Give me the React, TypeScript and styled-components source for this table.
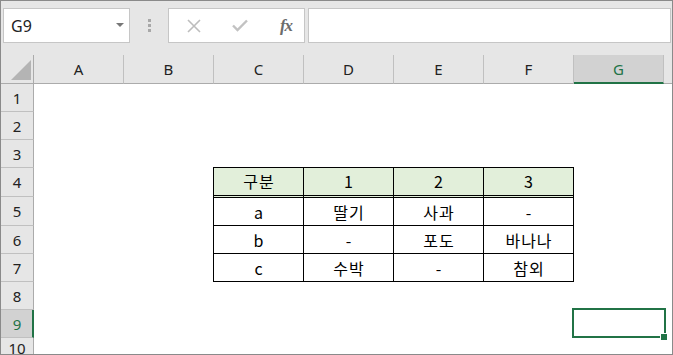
import styled, { createGlobalStyle } from "styled-components";

const GREEN = "#217346";
const HEADER_BG = "#e6e6e6";
const HEADER_SEL = "#d2d2d2";

const GlobalStyle = createGlobalStyle`
  html, body { margin: 0; padding: 0; background: #fff; }
  * { box-sizing: border-box; }
`;

const columns = ["A", "B", "C", "D", "E", "F", "G"];
const rows = [1, 2, 3, 4, 5, 6, 7, 8, 9, 10];
const activeCol = "G";
const activeRow = 9;

const header = ["구분", "1", "2", "3"];
const data = [
  ["a", "딸기", "사과", "-"],
  ["b", "-", "포도", "바나나"],
  ["c", "수박", "-", "참외"],
];

const Window = styled.div`
  width: 673px;
  height: 355px;
  border: 1px solid #8a8a8a;
  background: ${HEADER_BG};
  display: flex;
  flex-direction: column;
  overflow: hidden;
  font-family: "Noto Sans", "Open Sans", sans-serif;
  color: #222;
`;

const FormulaBar = styled.div`
  height: 54px;
  flex: none;
  display: flex;
  align-items: flex-start;
  padding: 7px 0 0 2px;
`;

const NameBox = styled.div`
  width: 127px;
  height: 35px;
  background: #fff;
  border: 1px solid #c6c6c6;
  display: flex;
  align-items: center;
  justify-content: space-between;
  padding: 0 5px 0 7px;
  font-size: 16px;
`;

const Caret = styled.span`
  width: 0;
  height: 0;
  border-left: 4px solid transparent;
  border-right: 4px solid transparent;
  border-top: 4px solid #777;
  margin-bottom: 2px;
`;

const Grip = styled.div`
  width: 38px;
  height: 35px;
  display: flex;
  flex-direction: column;
  align-items: center;
  justify-content: center;
  gap: 2px;
  span {
    width: 3px;
    height: 3px;
    background: #a8a8a8;
  }
`;

const ButtonBox = styled.div`
  width: 137px;
  height: 35px;
  background: #fff;
  border: 1px solid #c6c6c6;
  display: flex;
  align-items: center;
  padding-left: 14px;
  gap: 24px;
`;

const IconSlot = styled.span`
  width: 22px;
  height: 22px;
  display: flex;
  align-items: center;
  justify-content: center;
`;

const Fx = styled.span`
  font-family: "Liberation Serif", serif;
  font-style: italic;
  font-weight: bold;
  font-size: 17px;
  color: #6c6c6c;
  letter-spacing: -1px;
`;

const FormulaInput = styled.div`
  flex: 1;
  height: 35px;
  margin-left: 3px;
  margin-right: 1px;
  background: #fff;
  border: 1px solid #c6c6c6;
`;

const Sheet = styled.div`
  flex: 1;
  display: grid;
  grid-template-columns: 33px repeat(7, 90px) 1fr;
  grid-template-rows: 29px 28px 28px 28px 29px 29px 28px 28px 28px 28px 1fr;
  background: #fff;
`;

const Corner = styled.div`
  grid-column: 1;
  grid-row: 1;
  background: ${HEADER_BG};
  border-right: 1px solid #ababab;
  border-bottom: 1px solid #ababab;
  display: flex;
  align-items: flex-end;
  justify-content: flex-end;
  padding: 0 2px 3px 0;
`;

const CornerMark = styled.span`
  width: 0;
  height: 0;
  border-left: 20px solid transparent;
  border-bottom: 20px solid #b4b4b4;
`;

const ColHeader = styled.div<{ $active?: boolean }>`
  grid-row: 1;
  background: ${(p) => (p.$active ? HEADER_SEL : HEADER_BG)};
  border-right: 1px solid #c0c0c0;
  border-bottom: ${(p) => (p.$active ? `2px solid ${GREEN}` : "1px solid #ababab")};
  color: ${(p) => (p.$active ? GREEN : "#222")};
  display: flex;
  align-items: center;
  justify-content: center;
  font-size: 15px;
  padding-top: ${(p) => (p.$active ? "1px" : "0")};
`;

const HeaderFiller = styled.div`
  grid-row: 1;
  grid-column: 9;
  background: ${HEADER_BG};
  border-bottom: 1px solid #ababab;
`;

const RowHeader = styled.div<{ $active?: boolean; $row: number }>`
  grid-column: 1;
  grid-row: ${(p) => p.$row + 1};
  background: ${(p) => (p.$active ? HEADER_SEL : HEADER_BG)};
  border-right: ${(p) => (p.$active ? `2px solid ${GREEN}` : "1px solid #ababab")};
  border-bottom: 1px solid #c0c0c0;
  color: ${(p) => (p.$active ? GREEN : "#222")};
  display: flex;
  align-items: center;
  justify-content: center;
  padding-left: ${(p) => (p.$active ? "1px" : "0")};
  font-size: 15px;
  overflow: hidden;
`;

/* bordered table over C4:F7 */
const DataTable = styled.div`
  grid-column: 4 / 8;
  grid-row: 5 / 9;
  align-self: start;
  justify-self: start;
  margin: -1px 0 0 -1px;
  width: 361px;
  display: grid;
  grid-template-columns: repeat(4, 90px);
  grid-template-rows: 30px repeat(3, 28px);
  border-left: 1px solid #000;
  border-top: 1px solid #000;
  font-family: "Noto Sans CJK KR", "Noto Sans", sans-serif;
  font-size: 16px;
  letter-spacing: 1px;
  color: #000;
`;

const Cell = styled.div<{ $head?: boolean }>`
  background: ${(p) => (p.$head ? "#e2efda" : "#fff")};
  border-right: 1px solid #000;
  border-bottom: ${(p) => (p.$head ? "3px double #000" : "1px solid #000")};
  display: flex;
  align-items: center;
  justify-content: center;
  padding: 0 0 ${(p) => (p.$head ? "2px" : "0")} 1px;
`;

const Selection = styled.div`
  grid-column: 8;
  grid-row: 10;
  align-self: start;
  justify-self: start;
  margin: -2px 0 0 -2px;
  width: 94px;
  height: 30px;
  border: 2px solid ${GREEN};
  position: relative;
`;

const FillHandle = styled.span`
  position: absolute;
  left: 86px;
  top: 23px;
  width: 8px;
  height: 8px;
  background: ${GREEN};
  border: 1px solid #fff;
`;

function CancelIcon() {
  return (
    <svg width="14" height="14" viewBox="0 0 14 14">
      <path d="M1 1 L13 13 M13 1 L1 13" stroke="#bdbdbd" strokeWidth="1.6" fill="none" />
    </svg>
  );
}

function EnterIcon() {
  return (
    <svg width="16" height="13" viewBox="0 0 16 13">
      <path d="M1 6.5 L5.5 11 L15 1.5" stroke="#c2c2c2" strokeWidth="2.4" fill="none" />
    </svg>
  );
}

export default function App() {
  return (
    <>
      <GlobalStyle />
      <Window>
        <FormulaBar>
          <NameBox>
            <span>G9</span>
            <Caret />
          </NameBox>
          <Grip>
            <span />
            <span />
            <span />
          </Grip>
          <ButtonBox>
            <IconSlot>
              <CancelIcon />
            </IconSlot>
            <IconSlot>
              <EnterIcon />
            </IconSlot>
            <IconSlot>
              <Fx>fx</Fx>
            </IconSlot>
          </ButtonBox>
          <FormulaInput />
        </FormulaBar>
        <Sheet>
          <Corner>
            <CornerMark />
          </Corner>
          {columns.map((c) => (
            <ColHeader key={c} $active={c === activeCol}>
              {c}
            </ColHeader>
          ))}
          <HeaderFiller />
          {rows.map((r) => (
            <RowHeader key={r} $row={r} $active={r === activeRow}>
              {r}
            </RowHeader>
          ))}
          <DataTable>
            {header.map((h, i) => (
              <Cell key={`h${i}`} $head>
                {h}
              </Cell>
            ))}
            {data.map((row, ri) =>
              row.map((v, ci) => <Cell key={`${ri}-${ci}`}>{v}</Cell>)
            )}
          </DataTable>
          <Selection>
            <FillHandle />
          </Selection>
        </Sheet>
      </Window>
    </>
  );
}
